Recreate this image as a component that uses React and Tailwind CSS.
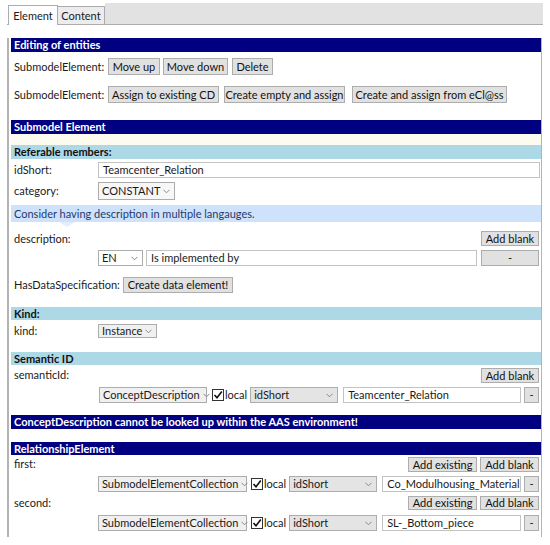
import React from "react";

const Bar = ({ children, className = "" }) => (
    <div className={`bg-[#000080] text-white font-bold pl-[3px] ${className}`}>{children}</div>
);

const SubBar = ({ children, className = "" }) => (
    <div className={`bg-[#add8e6] text-[#111] font-bold pl-[3px] ${className}`}>{children}</div>
);

const Btn = ({ children, className = "" }) => (
    <div className={`bg-[#e1e1e1] border border-[#adadad] text-[#111] flex items-center justify-center whitespace-nowrap shrink-0 ${className}`}>
        {children}
    </div>
);

const Chevron = () => (
    <svg width="7" height="5" viewBox="0 0 7 5" className="shrink-0">
        <path d="M0.5 0.8 L3.5 3.8 L6.5 0.8" fill="none" stroke="#888" strokeWidth="1" />
    </svg>
);

const Combo = ({ value, className = "", bg = "bg-[#f0f0f0]" }) => (
    <div className={`${bg} border border-[#acacac] flex items-center justify-between gap-[3px] pl-[3px] pr-[4px] whitespace-nowrap shrink-0 ${className}`}>
        <span>{value}</span>
        <Chevron />
    </div>
);

const Input = ({ value, className = "" }) => (
    <div className={`bg-white border border-[#c3c3c3] flex items-center pl-[4px] whitespace-nowrap overflow-hidden ${className}`}>
        {value}
    </div>
);

const Check = () => (
    <div className="w-[12px] h-[12px] border border-[#333] bg-white flex items-center justify-center shrink-0">
        <svg width="10" height="10" viewBox="0 0 10 10">
            <path d="M1.5 5 L4 7.8 L8.8 1.5" fill="none" stroke="#111" strokeWidth="1.6" />
        </svg>
    </div>
);

const Label = ({ children, w = "w-[87px]" }) => (
    <div className={`${w} shrink-0 pl-[3px] whitespace-nowrap`}>{children}</div>
);

const RefRow = ({ type, value, className = "" }) => (
    <div className={`flex items-center h-[16px] pr-[2px] ${className}`}>
        <div className="w-[87px] shrink-0" />
        <Combo value={type} className="w-[149px] h-full" />
        <div className="ml-[4px]"><Check /></div>
        <span className="ml-px">local</span>
        <Combo value="idShort" className="w-[88px] h-full ml-[3px]" bg="bg-[#e4e4e4]" />
        <Input value={value} className="flex-1 h-full ml-[5px]" />
        <Btn className="w-[15px] h-full ml-[3px]">-</Btn>
    </div>
);

export default function App() {
    return (
        <div
            className="w-[550px] h-[545px] bg-white overflow-hidden text-[11px] leading-[14px] text-[#1a1a1a]"
            style={{ fontFamily: "Lato, 'Noto Sans', sans-serif" }}
        >
            <div className="pl-[7px] pt-[3px] w-[543px]">
                {/* Tabs */}
                <div className="flex items-end h-[22px] border-b border-[#acacac]">
                    <div className="ml-px h-[20px] w-[50px] bg-white border border-b-0 border-[#acacac] flex items-center justify-center -mb-px relative z-10">
                        Element
                    </div>
                    <div className="h-[18px] w-[47px] bg-[#ececec] border border-l-0 border-b-0 border-[#acacac] flex items-center justify-center">
                        Content
                    </div>
                    <div className="flex-1 h-full bg-[#e2e2e2]" />
                </div>

                {/* Panel */}
                <div className="w-[535px] border-l-2 border-r border-[#b4b4b4] pl-[2px] pb-[6px]">
                    <Bar className="mt-[13px] h-[14px]">Editing of entities</Bar>

                    <div className="flex items-center h-[17px] mt-[6px]">
                        <Label w="w-[97px]">SubmodelElement:</Label>
                        <Btn className="h-full w-[52px]">Move up</Btn>
                        <Btn className="h-full w-[65px] ml-[3px]">Move down</Btn>
                        <Btn className="h-full w-[41px] ml-[4px]">Delete</Btn>
                    </div>

                    <div className="flex items-center h-[17px] mt-[11px]">
                        <Label w="w-[97px]">SubmodelElement:</Label>
                        <Btn className="h-full w-[111px]">Assign to existing CD</Btn>
                        <Btn className="h-full w-[121px] ml-[5px]">Create empty and assign</Btn>
                        <Btn className="h-full w-[155px] ml-[7px]">Create and assign from eCl@ss</Btn>
                    </div>

                    <Bar className="mt-[17px] h-[14px]">Submodel Element</Bar>
                    <div className="h-[11px] bg-[#fdfbf0]" />

                    <SubBar className="h-[14px]">Referable members:</SubBar>
                    <div className="flex items-center h-[16px] mt-[3px] pr-[1px]">
                        <Label>idShort:</Label>
                        <Input value="Teamcenter_Relation" className="flex-1 h-full" />
                    </div>
                    <div className="flex items-center h-[18px] mt-[4px]">
                        <Label>category:</Label>
                        <Combo value="CONSTANT" className="w-[77px] h-full" bg="bg-[#f7f7f7]" />
                    </div>

                    <div className="relative mt-[5px] h-[17px] bg-[#cfe2fb] text-[#1e3a6e] pl-[3px] flex items-center">
                        Consider having description in multiple langauges.
                        <div className="absolute left-[48px] top-[17px] w-0 h-0 border-l-[8px] border-r-[8px] border-t-[5px] border-l-transparent border-r-transparent border-t-[#e3eefc]" />
                    </div>

                    <div className="flex items-center justify-between h-[15px] mt-[9px] pr-[2px]">
                        <Label>description:</Label>
                        <Btn className="h-full w-[58px]">Add blank</Btn>
                    </div>
                    <div className="flex items-center h-[16px] mt-[4px] pr-[2px]">
                        <div className="w-[87px] shrink-0" />
                        <Combo value="EN" className="w-[45px] h-full" bg="bg-white" />
                        <Input value="Is implemented by" className="flex-1 h-full ml-[3px]" />
                        <Btn className="w-[58px] h-full ml-[4px]">-</Btn>
                    </div>

                    <div className="flex items-center h-[16px] mt-[11px]">
                        <Label w="w-[112px]">HasDataSpecification:</Label>
                        <Btn className="h-full w-[110px]">Create data element!</Btn>
                    </div>

                    <SubBar className="mt-[14px] h-[13px] leading-[13px]">Kind:</SubBar>
                    <div className="flex items-center h-[14px] mt-[4px]">
                        <Label>kind:</Label>
                        <Combo value="Instance" className="w-[59px] h-full" />
                    </div>

                    <SubBar className="mt-[14px] h-[13px] leading-[13px]">Semantic ID</SubBar>
                    <div className="flex items-start justify-between h-[15px] mt-[3px] pr-[2px]">
                        <Label>semanticId:</Label>
                        <Btn className="h-full w-[58px]">Add blank</Btn>
                    </div>
                    <div className="flex items-center h-[16px] mt-[4px] pr-[2px]">
                        <div className="w-[88px] shrink-0" />
                        <Combo value="ConceptDescription" className="w-[108px] h-full" />
                        <div className="ml-[5px]"><Check /></div>
                        <span className="ml-px">local</span>
                        <Combo value="idShort" className="w-[88px] h-full ml-[3px]" bg="bg-[#e4e4e4]" />
                        <Input value="Teamcenter_Relation" className="flex-1 h-full ml-[5px]" />
                        <Btn className="w-[15px] h-full ml-[3px]">-</Btn>
                    </div>

                    <Bar className="mt-[12px] h-[14px]">ConceptDescription cannot be looked up within the AAS environment!</Bar>

                    <Bar className="mt-[13px] h-[13px] leading-[13px]">RelationshipElement</Bar>
                    <div className="flex items-start justify-between h-[15px] mt-[2px] pr-[2px]">
                        <Label>first:</Label>
                        <div className="flex h-full">
                            <Btn className="h-full w-[69px]">Add existing</Btn>
                            <Btn className="h-full w-[59px] ml-[3px]">Add blank</Btn>
                        </div>
                    </div>
                    <RefRow type="SubmodelElementCollection" value="Co_Modulhousing_Material" className="mt-[4px]" />
                    <div className="flex items-start justify-between h-[14px] mt-[4px] pr-[2px]">
                        <Label>second:</Label>
                        <div className="flex h-full">
                            <Btn className="h-full w-[69px]">Add existing</Btn>
                            <Btn className="h-full w-[59px] ml-[3px]">Add blank</Btn>
                        </div>
                    </div>
                    <RefRow type="SubmodelElementCollection" value="SL-_Bottom_piece" className="mt-[5px]" />
                </div>
            </div>
        </div>
    );
}
